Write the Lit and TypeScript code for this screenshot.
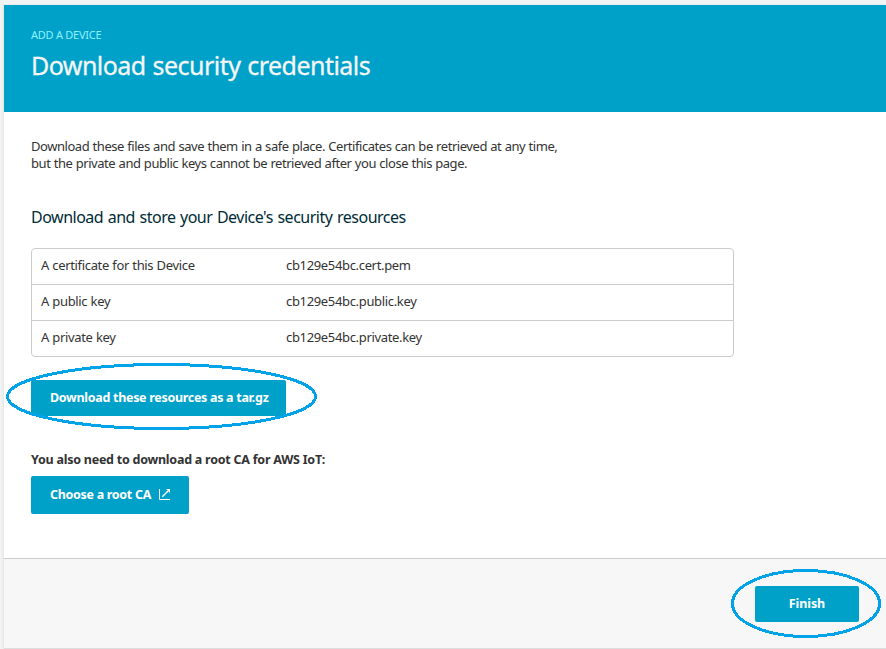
import { LitElement, html, css } from "lit";
import { customElement } from "lit/decorators.js";

const RESOURCES = [
  ["A certificate for this Device", "cb129e54bc.cert.pem"],
  ["A public key", "cb129e54bc.public.key"],
  ["A private key", "cb129e54bc.private.key"],
];

@customElement("app-root")
class AppRoot extends LitElement {
  static styles = css`
    :host {
      display: block;
      position: relative;
      box-sizing: border-box;
      width: 886px;
      height: 649px;
      padding: 5px 0 0 4px;
      overflow: hidden;
      background: #f2f3f3;
      color: #333;
      font: 13px/17px "Noto Sans", "Open Sans", sans-serif;
      white-space: nowrap;
    }
    * { box-sizing: border-box; }
    h1, h2, p { margin: 0; font-weight: 400; }
    .card {
      display: flex;
      flex-direction: column;
      height: 644px;
      background: #fff;
      border-bottom: 1px solid #dcdddd;
      box-shadow: -1px 0 2px #e2e4e4;
    }
    .head { height: 107px; padding: 21px 27px 0; background: #00a1c9; color: #f5f5f5; }
    .crumb { font-size: 11px; line-height: 17px; letter-spacing: -0.25px; color: #8ff0ff; }
    .head h1 { margin-top: 5px; font-size: 25px; line-height: 34px; letter-spacing: -0.54px; word-spacing: 1px; -webkit-text-stroke: 0.3px #f5f5f5; }
    .body { flex: 1; padding: 26px 27px 0; }
    .intro { letter-spacing: -0.45px; word-spacing: 0.4px; }
    .body h2 { margin-top: 34px; font-size: 16px; line-height: 22px; letter-spacing: -0.49px; word-spacing: 0.85px; color: #002b36; }
    .table { width: 703px; margin-top: 20px; border: 1px solid #ccc; border-radius: 4px; letter-spacing: -0.34px; word-spacing: 0.3px; }
    .row { display: grid; grid-template-columns: 245px 1fr; height: 36px; padding: 8px 9px 0; }
    .row + .row { border-top: 1px solid #ccc; }
    .row:first-child { height: 35px; }
    button {
      display: flex;
      align-items: center;
      height: 36px;
      padding: 0 0 1px 19px;
      border: 0;
      border-radius: 2px;
      background: #00a1c9;
      color: #fff;
      font: 700 12.5px/17px "Noto Sans", "Open Sans", sans-serif;
      letter-spacing: -0.3px;
      white-space: nowrap;
    }
    .tar { width: 255px; margin-top: 23px; }
    .note { margin-top: 35px; font-size: 12.5px; font-weight: 700; letter-spacing: -0.24px; }
    .root { width: 158px; height: 38px; margin-top: 8px; padding-right: 18px; justify-content: space-between; }
    .root svg { flex: none; }
    .foot {
      display: flex;
      justify-content: flex-end;
      height: 90px;
      padding: 27px 27px 0 0;
      border-top: 1px solid #ccc;
      background: #f7f7f7;
    }
    .finish { width: 104px; padding-left: 0; justify-content: center; letter-spacing: -0.1px; }
    .marks { position: absolute; inset: 0; pointer-events: none; }
  `;

  render() {
    return html`
      <div class="card">
        <header class="head">
          <div class="crumb">ADD A DEVICE</div>
          <h1>Download security credentials</h1>
        </header>
        <main class="body">
          <p class="intro">
            Download these files and save them in a safe place. Certificates can be retrieved at any time,<br />
            but the private and public keys cannot be retrieved after you close this page.
          </p>
          <h2>Download and store your Device's security resources</h2>
          <div class="table">
            ${RESOURCES.map(([label, file]) => html`
              <div class="row"><div>${label}</div><div>${file}</div></div>
            `)}
          </div>
          <button class="tar">Download these resources as a tar.gz</button>
          <p class="note">You also need to download a root CA for AWS IoT:</p>
          <button class="root">
            <span>Choose a root CA</span>
            <svg width="13" height="13" viewBox="0 0 13 13">
              <path d="M1.5 1V11.5H12" fill="none" stroke="#fff" />
              <path d="M4.3 8.7L10 3" fill="none" stroke="#fff" stroke-width="1.4" />
              <path d="M8 1H12V5Z" fill="#fff" />
            </svg>
          </button>
        </main>
        <footer class="foot"><button class="finish">Finish</button></footer>
      </div>
      <svg class="marks" width="886" height="649" fill="none" stroke="#00a2e8" stroke-width="3" shape-rendering="crispEdges">
        <ellipse cx="161.5" cy="396.5" rx="154" ry="32" />
        <ellipse cx="806" cy="603.5" rx="73.5" ry="33" />
      </svg>
    `;
  }
}
